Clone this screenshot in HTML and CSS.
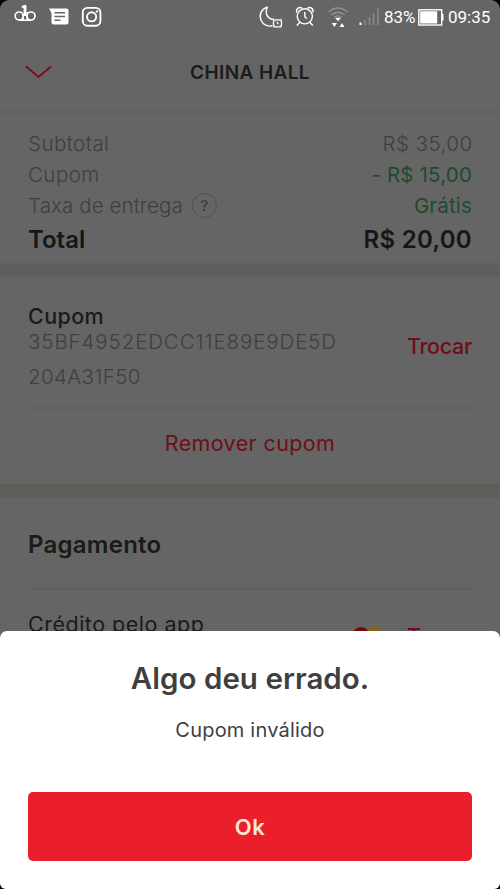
FILE: index.html
```html
<!DOCTYPE html>
<html lang="pt-BR">
<head>
<meta charset="utf-8">
<title>China Hall</title>
<link rel="stylesheet" href="styles.css">
</head>
<body>
<div class="screen">
  <div class="status">
    <svg class="status-left" width="110" height="34" viewBox="0 0 110 34" fill="none" stroke="#fff">
      <g stroke-width="1.7"><circle cx="19.200" cy="16" r="4"/><circle cx="31" cy="16" r="4"/><path d="M23.300 14v6M27 12v8M19 20.200h12" stroke-width="1.400"/><path d="M21.800 7.200l2.500-1" stroke-width="2.200"/><path d="M25 5v11" stroke-width="2.800"/></g>
      <path d="M49 8.500h17.500q2 0 2 2v12q0 2-2 2h-13q-2 0-2-2V13z" fill="#fff" stroke="none"/>
      <path d="M54.500 12.800h10.500M54.500 16.500h10.500M54.500 20.300h6" stroke="#656565" stroke-width="1.400"/>
      <rect x="82.800" y="7.900" width="17.600" height="17.800" rx="4.500" stroke-width="1.900"/><circle cx="91.600" cy="16.800" r="4.600" stroke-width="1.900"/><circle cx="97" cy="11.400" r="1.200" fill="#fff" stroke="none"/>
    </svg>
    <div class="status-right">
      <svg width="124" height="34" viewBox="257 0 124 34" fill="none" stroke="#fff" stroke-width="1.400">
        <path d="M267.500 6.800C261.500 8.800 258.800 14.500 261 20c2 5 7 7 11.500 5.800M267.500 6.800C264.500 13 267 18.500 273.500 19.500"/>
        <rect x="273.500" y="19.800" width="8" height="7" rx="2.200" stroke-width="1.300"/><path d="M277.300 21.500v2.200h1.500M273.200 19.500l1-.8M281.800 19.500l-1-.8M274.200 27.200l-.8.8M280.800 27.200l.8.800" stroke-width="1"/>
        <circle cx="304.800" cy="16.300" r="7.600"/><path d="M304.800 12v4.800l2 2M299.600 22.500l-2.800 3M310 22.500l2.800 3M296.800 12.500c-1.200-3.500 2-6 5.200-4.500M312.800 12.500c1.200-3.500-2-6-5.200-4.500"/>
        <path d="M328.500 12.300q9.500-8.500 19 0M331.200 15q6.800-5.500 13.600 0M334 17.300q4-2.800 8 0" stroke="#929292" stroke-width="1.300"/>
        <path d="M335 17.800h6L338 21.200zM331.800 23h5.200l-2.600 4zM339.500 27h5l-2.500-4z" fill="#fff" stroke="none"/>
        <path d="M360.500 22.500v2.500" stroke-width="2"/><path d="M365 20v5M369.500 17v8M373.500 13v12M378 8.500v16.500" stroke="#898989" stroke-width="1.600"/>
      </svg>
      <span class="battery-text">83%</span>
      <svg class="battery" width="26" height="17" viewBox="0 0 26 17"><rect x=".8" y=".8" width="22.900" height="15.200" fill="none" stroke="#fff" stroke-width="1.400"/><path d="M2.200 2.200h17v12.400h-17zM24 5h1.500v6.500H24z" fill="#fff"/></svg>
      <span class="clock">09:35</span>
    </div>
  </div>
  <header class="header">
    <svg class="chevron" width="28" height="14" viewBox="0 0 28 14"><path d="M1 1.500L13.500 12 26 1.500" fill="none" stroke="#751118" stroke-width="2"/></svg>
    <h1>CHINA HALL</h1>
  </header>
  <section class="summary">
    <div class="row"><span class="t-sub">Subtotal</span><span class="v-sub">R$ 35,00</span></div>
    <div class="row"><span class="t-cup">Cupom</span><span class="green">- R$ 15,00</span></div>
    <div class="row"><span class="fee">Taxa de entrega<span class="help">?</span></span><span class="green">Grátis</span></div>
    <div class="row total"><span>Total</span><span class="v-total">R$ 20,00</span></div>
  </section>
  <section class="coupon">
    <div class="coupon-info">
      <div><h2>Cupom</h2><p class="code"><span class="first">35BF4952EDCC11E89E9DE5D</span><span>204A31F50</span></p></div>
      <a class="change">Trocar</a>
    </div>
    <a class="remove">Remover cupom</a>
  </section>
  <section class="payment">
    <h2>Pagamento</h2>
    <div class="method">
      <span class="credit">Crédito pelo app</span>
      <svg class="card" width="31" height="18" viewBox="0 0 31 18"><circle cx="9" cy="9" r="9" fill="#740b0b"/><circle cx="22" cy="9" r="9" fill="#8b6212"/></svg>
      <a class="change">Trocar</a>
    </div>
  </section>
  <div class="sheet">
    <h2>Algo deu errado.</h2>
    <p>Cupom inválido</p>
    <button>Ok</button>
  </div>
</div>
</body>
</html>
```
FILE: styles.css
```css
* { box-sizing: border-box; margin: 0; }
body { background: #000; font-family: Inter, "Liberation Sans", sans-serif; }
.screen { position: relative; height: 889px; overflow: hidden; background: #656565; border-radius: 9px 9px 6px 6px; color: #1a1a1a; }
.status { display: flex; justify-content: space-between; height: 34px; padding-right: 10px; color: #fff; font: 17px/34px Roboto, sans-serif; }
.status-left { display: block; }
.status-right { display: flex; align-items: center; }
.battery-text { margin-left: 3px; width: 32px; }
.battery { margin: 0 4px 0 2px; }
.clock { width: 42px; }
.header { display: grid; grid-template-columns: 51px 1fr 51px; align-items: center; height: 79px; padding-top: 1px; border-bottom: 2px solid #5f5f5f; }
.chevron { margin: 0 0 2px 25px; justify-self: start; }
h1 { font-size: 19px; font-weight: 600; letter-spacing: .4px; text-align: center; line-height: 24px; color: #1c1c1c; }
.summary { height: 164px; padding: 15px 28px 0; border-bottom: 14px solid #625e5b; font-size: 20.5px; font-weight: 300; line-height: 31px; color: #3f3f3f; }
.row { display: flex; justify-content: space-between; }
.t-sub, .v-sub, .t-cup { letter-spacing: .45px; }
.v-sub { margin-right: -.5px; }
.fee { display: flex; align-items: center; letter-spacing: .1px; }
.help { width: 25px; height: 25px; margin-left: 9px; border: 1.5px solid #515151; border-radius: 50%; font-size: 15px; font-weight: 600; line-height: 23px; text-align: center; }
.green { color: #1d4b2e; font-weight: 400; letter-spacing: .18px; }
.total { font-size: 24px; font-weight: 600; line-height: 38px; color: #161616; }
.v-total { letter-spacing: .3px; }
.coupon { height: 221px; padding: 30px 28px 0; border-bottom: 14px solid #605e5a; }
.coupon-info { display: flex; justify-content: space-between; align-items: center; height: 102px; padding-bottom: 14px; border-bottom: 2px solid #5f5f5f; }
.coupon h2 { font-size: 21.5px; font-weight: 500; line-height: 19px; margin-bottom: -2px; letter-spacing: .4px; }
.code { display: flex; flex-direction: column; font-size: 20.5px; font-weight: 300; line-height: 35px; letter-spacing: .4px; color: #3f3f3f; }
.code .first { letter-spacing: .9px; }
.change { font-size: 21.5px; font-weight: 500; letter-spacing: -.3px; color: #710d17; }
.coupon .change { margin-bottom: 8px; }
.remove { display: block; text-align: center; font-size: 21.5px; line-height: 69px; letter-spacing: .38px; color: #710d17; }
.payment { padding: 0 28px; }
.payment h2 { height: 92px; padding-top: 2px; font-size: 24px; font-weight: 600; line-height: 90px; letter-spacing: .25px; border-bottom: 2px solid #5f5f5f; }
.method { display: flex; align-items: flex-start; }
.credit { flex: 1; font-size: 21.5px; line-height: 69px; letter-spacing: .5px; }
.card { margin: 37px 24px 0 0; }
.method .change { line-height: 92px; }
.sheet { position: absolute; left: 0; right: 0; bottom: 0; height: 258px; padding: 17px 28px 0; background: #fff; border-radius: 7px 7px 0 0; text-align: center; color: #3f3f3f; }
.sheet h2 { font-size: 29.5px; font-weight: 600; line-height: 60px; letter-spacing: .03px; }
.sheet p { padding-top: 1px; font-size: 20px; line-height: 43px; letter-spacing: .2px; }
.sheet button { display: block; width: 100%; height: 69px; margin-top: 40px; border: 0; border-radius: 5px; background: #eb1e2b; color: #fde6dc; font: 600 22px Inter, sans-serif; letter-spacing: .5px; }
```
